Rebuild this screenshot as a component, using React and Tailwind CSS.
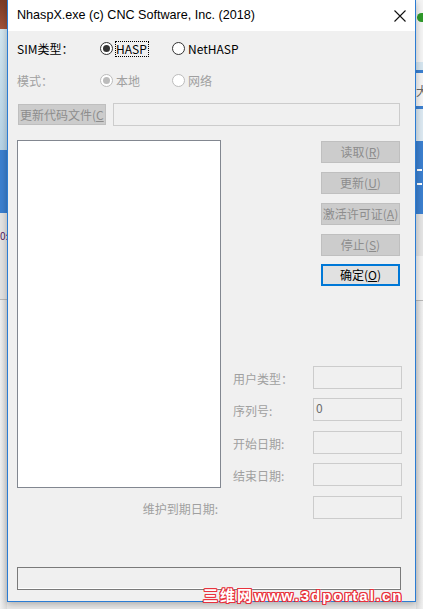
import { useState } from 'react';

const cjk = "font-['Noto_Sans_CJK_SC','Noto_Sans',sans-serif]";

function Radio({ checked, disabled }) {
  return (
    <span className={`flex h-[13px] w-[13px] shrink-0 items-center justify-center rounded-full border bg-white ${disabled ? 'border-[#bcbcbc]' : 'border-[#333333]'}`}>
      {checked && <span className={`h-[7px] w-[7px] rounded-full ${disabled ? 'bg-[#bcbcbc]' : 'bg-[#333333]'}`} />}
    </span>
  );
}

function SideButton({ label, hot, primary, className = '' }) {
  return (
    <div
      className={`flex h-[22px] w-[79px] items-center justify-center whitespace-nowrap text-[12px] ${className} ${
        primary ? 'border-2 border-[#0078d7] bg-[#e1e1e1] text-black' : 'border border-[#bfbfbf] bg-[#cccccc] text-[#8d8d8d]'
      }`}
    >
      {label}(<span className="underline underline-offset-1">{hot}</span>)
    </div>
  );
}

function Field({ label, value, className = '' }) {
  return (
    <div className={`flex h-[23px] items-center ${className}`}>
      <span className="w-[80px] pt-[2px] text-[12px] text-[#a0a0a0]">{label}</span>
      <div className="h-[23px] w-[89px] border border-[#cccccc] bg-[#f0f0f0] pl-[2px] pt-[1px] text-[12px] leading-[16px] text-[#6d6d6d]">{value}</div>
    </div>
  );
}

function LeftStrip() {
  return (
    <div className="flex w-[7px] shrink-0 flex-col">
      <div className="h-[29px] bg-gradient-to-b from-[#7a3b26] to-[#a4543a]" />
      <div className="h-[121px] bg-gradient-to-b from-[#d3e6ef] to-[#b6d3e6]" />
      <div className="h-[63px] bg-[#3b7fcf]" />
      <div className="h-[37px] bg-[#e3e3e3] pt-[18px] text-[10px] leading-[10px] text-[#552266]">0:</div>
      <div className="h-[50px] border-b border-[#b8b8b8] bg-[#e2e2e2]" />
      <div className="flex-1 bg-gradient-to-r from-[#f0f0f0] to-[#dcdcdc]" />
    </div>
  );
}

function RightStrip() {
  return (
    <div className="flex w-[7px] shrink-0 flex-col">
      <div className="h-[13px] bg-[#f4f4f4]" />
      <div className="h-[9px] bg-[#f4f4f4] pl-[1px]"><div className="h-[9px] w-[6px] rounded-l-full bg-[#2f9a2a]" /></div>
      <div className="h-[40px] bg-[#f4f4f4]" />
      <div className="h-[8px] bg-[#d5e5ef]" />
      <div className="h-[3px] bg-[#3b7fcf]" />
      <div className="h-[33px] overflow-hidden bg-[#f4f4f4] pt-[12px] text-[12px] leading-[12px] text-[#666666]">大</div>
      <div className="h-[3px] bg-[#3b7fcf]" />
      <div className="h-[32px] bg-[#dbe8f1]" />
      <div className="h-[73px] bg-[#3b7fcf] pt-[28px]"><div className="ml-[1px] h-[16px] w-[5px] border-y-2 border-white" /></div>
      <div className="h-[42px] bg-[#e4e4e4]" />
      <div className="h-[45px] border-b border-[#b8b8b8] bg-[#f2f2f2]" />
      <div className="flex-1 bg-gradient-to-l from-[#f0f0f0] to-[#dcdcdc]" />
    </div>
  );
}

export default function App() {
  const [sim, setSim] = useState('HASP');

  return (
    <div className={`relative flex h-[609px] w-[423px] overflow-hidden bg-[#e9e9e9] ${cjk}`}>
      <LeftStrip />
      <div className="relative z-10 flex h-[602px] w-[409px] shrink-0 flex-col border-x border-b border-[#2b7cd3] bg-[#f0f0f0] shadow-[0_2px_7px_rgba(0,0,0,0.28)]">
        <div className="flex h-[31px] shrink-0 items-center bg-white pl-[9px]">
          <span className="font-['Liberation_Sans',sans-serif] text-[12.6px] text-black">NhaspX.exe (c) CNC Software, Inc. (2018)</span>
          <svg className="ml-auto mr-[9px]" width="12" height="12" viewBox="0 0 12 12">
            <path d="M0.5 0.5 L11.5 11.5 M11.5 0.5 L0.5 11.5" stroke="#111111" strokeWidth="1.1" fill="none" />
          </svg>
        </div>

        <div className="flex flex-col pl-[9px]">
          <div className="mt-[9px] flex h-[17px] items-center text-[12px] text-black">
            <span className="w-[83px]">SIM类型：</span>
            <div className="flex w-[72px] items-center" onClick={() => setSim('HASP')}>
              <Radio checked={sim === 'HASP'} />
              <span className="ml-[2px] border border-dotted border-black pr-[1px] leading-[14px]">HASP</span>
            </div>
            <div className="flex items-center" onClick={() => setSim('NetHASP')}>
              <Radio checked={sim === 'NetHASP'} />
              <span className="ml-[3px]">NetHASP</span>
            </div>
          </div>

          <div className="mt-[15px] flex h-[17px] items-center text-[12px] text-[#a0a0a0]">
            <span className="w-[83px]">模式：</span>
            <div className="flex w-[72px] items-center">
              <Radio checked disabled />
              <span className="ml-[3px]">本地</span>
            </div>
            <div className="flex items-center">
              <Radio disabled />
              <span className="ml-[3px]">网络</span>
            </div>
          </div>

          <div className="mt-[14px] flex h-[23px] items-start">
            <div className="ml-[1px] mt-[1px] flex h-[21px] w-[88px] items-center overflow-hidden whitespace-nowrap border border-[#bfbfbf] bg-[#cccccc] pl-[1px] text-[12px] text-[#8d8d8d]">
              更新代码文件(<span className="underline underline-offset-1">C</span>
            </div>
            <div className="ml-[7px] h-[23px] w-[287px] border border-[#cccccc] bg-[#f0f0f0]" />
          </div>

          <div className="mt-[14px] flex">
            <div className="h-[348px] w-[204px] shrink-0 border border-[#828790] bg-white" />
            <div className="ml-[12px] flex flex-col">
              <div className="ml-[88px] mt-[1px] flex flex-col">
                <SideButton label="读取" hot="R" />
                <SideButton label="更新" hot="U" className="mt-[9px]" />
                <SideButton label="激活许可证" hot="A" className="mt-[9px]" />
                <SideButton label="停止" hot="S" className="mt-[9px]" />
                <SideButton label="确定" hot="O" primary className="mt-[8px]" />
              </div>
              <div className="mt-[80px] flex flex-col">
                <Field label="用户类型：" />
                <Field label="序列号:" value="0" className="mt-[9px]" />
                <Field label="开始日期:" className="mt-[10px]" />
                <Field label="结束日期:" className="mt-[9px]" />
              </div>
            </div>
          </div>

          <div className="mt-[8px] flex h-[23px] items-center">
            <span className="w-[201px] pt-[2px] text-right text-[12px] text-[#a0a0a0]">维护到期日期:</span>
            <div className="ml-[95px] h-[23px] w-[89px] border border-[#cccccc] bg-[#f0f0f0]" />
          </div>

          <div className="mt-[48px] h-[23px] w-[384px] border border-[#7a7a7a] bg-[#f0f0f0] shadow-[inset_0_-1px_0_#ffffff]" />
        </div>
      </div>
      <RightStrip />

      <div className="absolute left-[203px] top-[586px] z-20 whitespace-nowrap font-['Liberation_Sans',sans-serif] text-[15px] font-bold leading-[18px] tracking-[2px] text-white [text-shadow:1px_0_0_#e8323c,-1px_0_0_#e8323c,0_1px_0_#e8323c,0_-1px_0_#e8323c,1px_1px_0_#e8323c,-1px_-1px_0_#e8323c,1px_-1px_0_#e8323c,-1px_1px_0_#e8323c]">
        <span className={cjk}>三维网</span>www.3dportal.cn
      </div>
    </div>
  );
}
